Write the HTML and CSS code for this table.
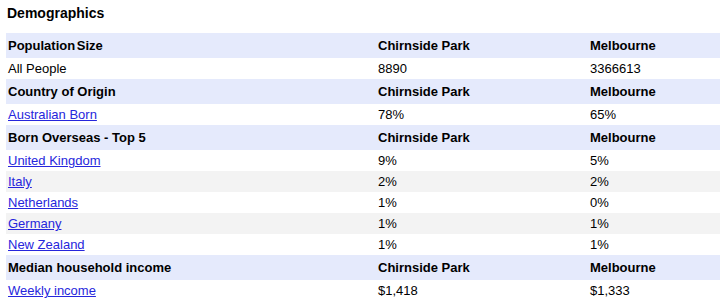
FILE: index.html
```html
<!DOCTYPE html>
<html>
<head>
<meta charset="utf-8">
<link rel="stylesheet" href="styles.css">
</head>
<body>
<div class="title">Demographics</div>
<table class="demo">
<colgroup><col class="c1"><col class="c2"><col class="c3"></colgroup>
<tr class="hd"><th>Population<span class="tight"> </span>Size</th><th>Chirnside Park</th><th>Melbourne</th></tr>
<tr><td>All People</td><td>8890</td><td>3366613</td></tr>
<tr class="hd"><th>Country of Origin</th><th>Chirnside Park</th><th>Melbourne</th></tr>
<tr><td><a href="#">Australian Born</a></td><td>78%</td><td>65%</td></tr>
<tr class="hd"><th>Born Overseas - Top 5</th><th>Chirnside Park</th><th>Melbourne</th></tr>
<tr><td><a href="#">United Kingdom</a></td><td>9%</td><td>5%</td></tr>
<tr class="alt"><td><a href="#">Italy</a></td><td>2%</td><td>2%</td></tr>
<tr><td><a href="#">Netherlands</a></td><td>1%</td><td>0%</td></tr>
<tr class="alt"><td><a href="#">Germany</a></td><td>1%</td><td>1%</td></tr>
<tr><td><a href="#">New Zealand</a></td><td>1%</td><td>1%</td></tr>
<tr class="hd"><th>Median household income</th><th>Chirnside Park</th><th>Melbourne</th></tr>
<tr><td><a href="#">Weekly income</a></td><td>$1,418</td><td>$1,333</td></tr>
</table>
</body>
</html>
```
FILE: styles.css
```css
html, body {
  margin: 0;
  padding: 0;
  background: #fff;
}
body {
  padding: 5px 0 0 6px;
  font-family: "Liberation Sans", Arial, sans-serif;
  font-size: 13px;
  color: #000;
}
.title {
  font-weight: bold;
  font-size: 14px;
  line-height: 16px;
  padding-left: 1px;
  margin-bottom: 12px;
}
.demo {
  border-collapse: collapse;
  width: 714px;
  table-layout: fixed;
}
.c1 { width: 370px; }
.c2 { width: 212px; }
.c3 { width: 132px; }
.demo th, .demo td {
  text-align: left;
  padding: 0 2px;
  line-height: 15px;
  white-space: nowrap;
}
.demo th {
  font-weight: bold;
  height: 25px;
}
.demo td {
  height: 21px;
}
.hd { background: #e5eafc; }
.alt { background: #f3f3f3; }
.demo a {
  color: #2626dc;
  text-decoration: underline;
}
.tight { word-spacing: -2px; }
```
